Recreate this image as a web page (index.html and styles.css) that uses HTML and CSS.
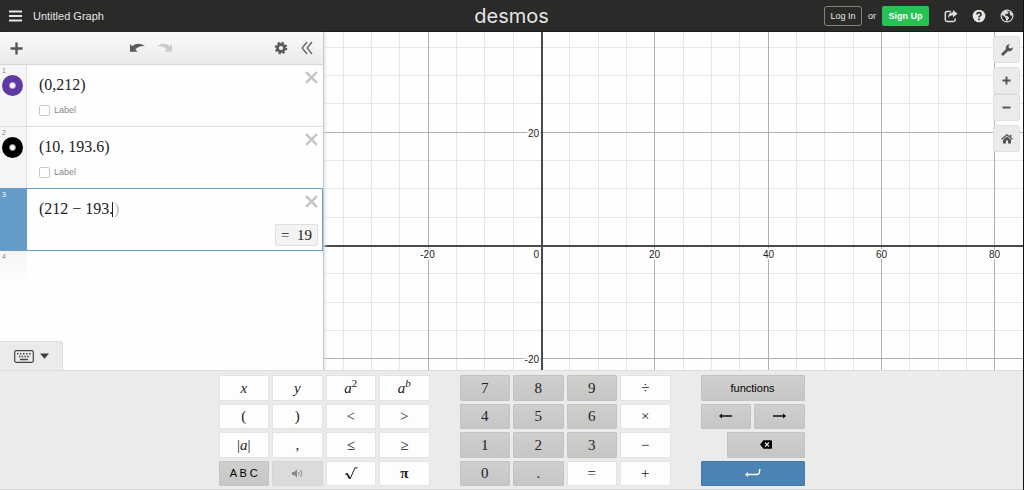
FILE: index.html
```html
<!DOCTYPE html>
<html lang="en">
<head>
<meta charset="utf-8">
<title>Untitled Graph</title>
<link rel="stylesheet" href="styles.css">
</head>
<body>
<div class="app">
  <header class="header">
    <div class="header-side">
      <button class="icon-btn" aria-label="Menu"><svg width="13" height="12" viewBox="0 0 13 12"><path d="M0 1.500h13M0 6h13M0 10.500h13" stroke="#e6e6e4" stroke-width="2"/></svg></button>
      <span class="title">Untitled Graph</span>
    </div>
    <a class="logo" href="#">desmos</a>
    <div class="header-side header-end">
      <button class="login">Log In</button>
      <span class="or">or</span>
      <button class="signup">Sign Up</button>
      <div class="header-icons">
        <button class="icon-btn" aria-label="Share"><svg width="14" height="14" viewBox="0 0 14 14"><path d="M7 2.500H3Q1.300 2.500 1.300 4.200V10.800Q1.300 12.500 3 12.500H9.500Q11.200 12.500 11.200 10.800V9.500" fill="none" stroke="#dededc" stroke-width="1.500"/><path d="M9 1l4.500 3.700L9 8.400V6.200Q5.500 6 4.300 9.500Q3.500 3.500 9 3.200z" fill="#dededc"/></svg></button>
        <button class="icon-btn" aria-label="Help"><svg width="14" height="14" viewBox="0 0 14 14"><circle cx="7" cy="7" r="6.300" fill="#e6e6e4"/><path d="M5 5.500Q5 3.600 7 3.600T9 5.400Q9 6.300 8 6.900Q7 7.400 7 8.500" fill="none" stroke="#2a2a28" stroke-width="1.600"/><rect x="6.200" y="9.500" width="1.700" height="1.700" fill="#2a2a28"/></svg></button>
        <button class="icon-btn" aria-label="Language"><svg width="14" height="14" viewBox="0 0 14 14"><circle cx="7" cy="7" r="5.900" fill="none" stroke="#d8d8d6" stroke-width="1.200"/><path d="M2 3.500L5 1.300 8 1.200 7.500 3 9 3.700 7.300 5 6 4.800 5 6.500 7.500 7 9.200 8.700 7.800 11 7 12.800 6 11 5.500 8.500 3.500 7 1.500 5.500z" fill="#d8d8d6"/><path d="M9.500 3l2-.4 1.300 3L11 7.200 10 5.500z" fill="#d8d8d6"/></svg></button>
      </div>
    </div>
  </header>

  <div class="workspace">
    <aside class="sidebar">
      <div class="toolbar">
        <button class="icon-btn" aria-label="Add item"><svg width="13" height="13" viewBox="0 0 13 13"><path d="M6.500 0.500v12M.5 6.500h12" stroke="#555" stroke-width="2.400"/></svg></button>
        <div class="history">
          <button class="icon-btn" aria-label="Undo"><svg width="15" height="10" viewBox="0 0 15 10"><path d="M0 1l2.300 2.300Q8-1.500 15 3.200Q9.500 2.300 5.300 6.200L7.500 8.700H0z" fill="#5b5b5b"/></svg></button>
          <button class="icon-btn" aria-label="Redo"><svg width="15" height="10" viewBox="0 0 15 10"><path d="M15 1l-2.300 2.300Q7-1.500 0 3.200Q5.500 2.300 9.700 6.200L7.500 8.700H15z" fill="#cbcbcb"/></svg></button>
        </div>
        <div class="tool-end">
          <button class="icon-btn" aria-label="Edit list"><svg width="14" height="14" viewBox="0 0 14 14"><circle cx="7" cy="7" r="3.500" fill="none" stroke="#5b5b5b" stroke-width="2.800"/><circle cx="7" cy="7" r="5.200" fill="none" stroke="#5b5b5b" stroke-width="2.200" stroke-dasharray="2.200 1.884"/></svg></button>
          <button class="icon-btn" aria-label="Hide list"><svg width="12" height="14" viewBox="0 0 12 14"><path d="M6 1L1.200 7 6 13M11 1L6.200 7 11 13" fill="none" stroke="#666" stroke-width="1.400"/></svg></button>
        </div>
      </div>

      <div class="list">
        <div class="expr">
          <div class="tab"><span>1</span><button class="point purple" aria-label="Point style 1"></button></div>
          <div class="body">
            <input class="math" aria-label="Expression 1" value="(0,212)">
            <label class="check"><input type="checkbox">Label</label>
          </div>
          <button class="close" aria-label="Delete 1"><svg width="13" height="13" viewBox="0 0 12 12"><path d="M1 1l10 10M11 1L1 11" stroke="#c4c4c4" stroke-width="2.200"/></svg></button>
        </div>
        <div class="expr">
          <div class="tab"><span>2</span><button class="point" aria-label="Point style 2"></button></div>
          <div class="body">
            <input class="math" aria-label="Expression 2" value="(10, 193.6)">
            <label class="check"><input type="checkbox">Label</label>
          </div>
          <button class="close" aria-label="Delete 2"><svg width="13" height="13" viewBox="0 0 12 12"><path d="M1 1l10 10M11 1L1 11" stroke="#c4c4c4" stroke-width="2.200"/></svg></button>
        </div>
        <div class="expr active">
          <div class="tab"><span>3</span></div>
          <div class="body">
            <div class="entry"><input class="math typing" aria-label="Expression 3" value="(212 − 193."><span class="caret"></span><span class="ghost">)</span></div>
            <output class="result">=&nbsp; 19</output>
          </div>
          <button class="close" aria-label="Delete 3"><svg width="13" height="13" viewBox="0 0 12 12"><path d="M1 1l10 10M11 1L1 11" stroke="#c4c4c4" stroke-width="2.200"/></svg></button>
        </div>
        <div class="expr next"><div class="tab"><span>4</span></div></div>
      </div>

      <button class="kb-toggle" aria-label="Hide keypad">
        <svg width="20" height="13" viewBox="0 0 20 13"><rect x=".7" y=".7" width="18.600" height="11.600" rx="1.500" fill="none" stroke="#444" stroke-width="1.200"/><path d="M3 3.800h14" stroke="#444" stroke-width="1.500" stroke-dasharray="1.500 1.500"/><path d="M5 6.500h11" stroke="#444" stroke-width="1.500" stroke-dasharray="1.500 1.200"/><path d="M6 9.500h8" stroke="#444" stroke-width="1.500"/></svg>
        <svg width="9" height="6" viewBox="0 0 9 6"><path d="M0 .5h9L4.500 5.800z" fill="#3c3c3c"/></svg>
      </button>
    </aside>

    <main class="graph">
      <svg class="plot" id="plot" role="img" aria-label="Graph paper"></svg>
      <div class="graph-tools">
        <button class="tool" aria-label="Graph settings"><svg width="12" height="12" viewBox="0 0 12 12"><path d="M1.800 10.200L7 5" stroke="#555" stroke-width="2.800" stroke-linecap="round"/><path d="M11.700 3.200A3.500 3.500 0 1 1 8.800.4L7.500 2.200 8 4l1.800.5z" fill="#555"/></svg></button>
        <div class="zoom">
          <button class="tool" aria-label="Zoom in"><svg width="9" height="9" viewBox="0 0 9 9"><path d="M4.500 .5v8M.5 4.500h8" stroke="#555" stroke-width="1.900"/></svg></button>
          <button class="tool" aria-label="Zoom out"><svg width="9" height="9" viewBox="0 0 9 9"><path d="M.5 4.500h8" stroke="#555" stroke-width="1.900"/></svg></button>
        </div>
        <button class="tool" aria-label="Default view"><svg width="12" height="10" viewBox="0 0 12 10"><path d="M.5 5.300L6 .8l5.500 4.500" fill="none" stroke="#555" stroke-width="1.300"/><path d="M2 5.700L6 2.500l4 3.200V9.500H7V6.500H5v3H2zM8.800.8H10.300V3.500L8.800 2.200z" fill="#555"/></svg></button>
      </div>
    </main>
  </div>

  <section class="keypad" aria-label="Keypad">
    <div class="keys wide">
      <button class="key"><i>x</i></button><button class="key"><i>y</i></button><button class="key"><span><i>a</i><sup>2</sup></span></button><button class="key"><span><i>a</i><sup><i>b</i></sup></span></button>
      <button class="key">(</button><button class="key">)</button><button class="key">&lt;</button><button class="key">&gt;</button>
      <button class="key"><span>|<i>a</i>|</span></button><button class="key">,</button><button class="key">≤</button><button class="key">≥</button>
      <button class="key dark sans abc">A B C</button>
      <button class="key muted" aria-label="Audio"><svg width="11" height="9" viewBox="0 0 11 9"><path d="M0 3h2L5 .5v8L2 6H0z" fill="#888"/><path d="M6.500 2.800q1.200 1.700 0 3.400M8.500 1.200q2.400 3.300 0 6.600" fill="none" stroke="#888"/></svg></button>
      <button class="key" aria-label="Square root"><svg width="14" height="13" viewBox="0 0 14 13"><path d="M1 7.500L3 6.300 6 12 11 .8H13.500" fill="none" stroke="#222"/><path d="M2.800 6.500L5.800 11.500" stroke="#222" stroke-width="1.600"/></svg></button>
      <button class="key"><b>π</b></button>
    </div>
    <div class="keys wide">
      <button class="key dark">7</button><button class="key dark">8</button><button class="key dark">9</button><button class="key">÷</button>
      <button class="key dark">4</button><button class="key dark">5</button><button class="key dark">6</button><button class="key">×</button>
      <button class="key dark">1</button><button class="key dark">2</button><button class="key dark">3</button><button class="key">−</button>
      <button class="key dark">0</button><button class="key dark">.</button><button class="key">=</button><button class="key">+</button>
    </div>
    <div class="keys actions">
      <button class="key dark sans full">functions</button>
      <button class="key dark half" aria-label="Left"><svg width="13" height="6" viewBox="0 0 13 6"><path d="M2 3h11" stroke="#000" stroke-width="1.400"/><path d="M0 3L3 .6v4.800z"/></svg></button>
      <button class="key dark half" aria-label="Right"><svg width="13" height="6" viewBox="0 0 13 6"><path d="M0 3h11" stroke="#000" stroke-width="1.400"/><path d="M13 3L10 .6v4.800z"/></svg></button>
      <button class="key dark back" aria-label="Backspace"><svg width="12" height="9" viewBox="0 0 12 9"><path d="M0 4.500L3.500 .3H11.200Q12 .3 12 1V8Q12 8.700 11.200 8.700H3.500z"/><path d="M5 2.500l4 4M9 2.500l-4 4" stroke="#ddd" stroke-width="1.300"/></svg></button>
      <button class="key enter full" aria-label="Enter"><svg width="16" height="8" viewBox="0 0 16 8"><path d="M2 5.500H12.500Q14.500 5.500 14.800 0" fill="none" stroke="#fff" stroke-width="1.500"/><path d="M0 5.500L3 3v5z" fill="#fff"/></svg></button>
    </div>
  </section>
</div>
<script src="graph.js"></script>
</body>
</html>
```
FILE: styles.css
```css
* { box-sizing: border-box; }
body { margin: 0; font-family: "Liberation Sans", Arial, sans-serif; color: #222; }
button { font: inherit; color: inherit; border: 0; padding: 0; background: none; cursor: pointer; }
svg { display: block; }

.app { display: flex; flex-direction: column; min-height: 100vh; border-right: 1px solid #111; background: #fefefe; }

.header { display: flex; align-items: center; height: 32px; padding: 0 9px; background: #2a2a28; border-bottom: 1px solid #1b1b1a; color: #e6e6e4; }
.header-side { flex: 1; display: flex; align-items: center; gap: 11px; }
.title { font-size: 11px; }
.logo { font: 20px/28px Inter, sans-serif; color: #e6e6e4; text-decoration: none; }
.header-end { justify-content: flex-end; gap: 5px; font-size: 9px; }
.login { height: 20px; width: 38px; border: 1px solid #82827f; border-radius: 3px; }
.or { width: 10px; text-align: center; }
.signup { height: 20px; width: 47px; border-radius: 2px; background: #27c254; color: #fff; font-weight: bold; }
.header-icons { display: flex; gap: 14px; padding-left: 10px; }

.workspace { flex: 1; display: flex; min-height: 0; }
.sidebar { position: relative; flex: none; width: 324px; display: flex; flex-direction: column; border-right: 1px solid #c8c8c8; background: #fefefe; box-shadow: 1px 2px 3px #ddd; z-index: 1; }
.toolbar { display: flex; align-items: center; justify-content: space-between; height: 33px; padding: 0 10px; background: linear-gradient(#fbfbfb, #ebebeb); border-bottom: 1px solid #d6d6d6; }
.history { display: flex; gap: 12px; padding-left: 4px; }
.tool-end { display: flex; align-items: center; gap: 13px; }

.list { flex: 1; }
.expr { position: relative; display: flex; min-height: 62px; border-bottom: 1px solid #dcdcdc; }
.tab { flex: none; width: 27px; padding: 2px 2px 0; background: #f5f5f5; border-right: 1px solid #e2e2e2; font-size: 7px; line-height: 8px; color: #888; }
.tab span { display: block; }
.point { display: block; width: 21px; height: 21px; border-radius: 50%; background: radial-gradient(circle, #fff 2px, #000 4px); }
.point.purple { background: radial-gradient(circle, #fff 2px, #5e3aa2 4px); }
.body { flex: 1; display: flex; flex-direction: column; padding: 10px 5px 4px 12px; }
.math { width: 220px; height: 20px; padding: 0; border: 0; outline: 0; background: transparent; color: #222; font: 16px/20px "Liberation Serif", serif; }
.check { display: flex; align-items: center; gap: 4px; padding-top: 10px; font-size: 9px; line-height: 11px; color: #888; }
.check input { appearance: none; width: 11px; height: 11px; margin: 0; border: 1px solid #c8c8c8; border-radius: 2px; background: #fff; }
.close { position: absolute; top: 6px; right: 5px; }
.active { border-bottom-color: #6a9cc4; box-shadow: 0 -1px #6a9cc4, inset -1px 0 #6a9cc4; }
.active .tab { background: #659bc8; border-color: #659bc8; color: #fff; }
.active .body { justify-content: space-between; }
.entry { display: flex; align-items: center; }
.typing { width: 73px; }
.caret { width: 1px; height: 15px; background: #222; }
.ghost { padding-left: 1px; font: 16px/20px "Liberation Serif", serif; color: #bbb; }
.result { align-self: flex-end; padding: 0 5px; border: 1px solid #dedede; border-radius: 2px; background: #f3f3f3; font: 15px/20px "Liberation Serif", serif; }
.next { min-height: 32px; border: 0; }
.next .tab { background: linear-gradient(#f5f5f5, #fefefe); border: 0; }

.kb-toggle { display: flex; align-items: center; gap: 6px; width: 63px; height: 29px; padding-left: 14px; background: #ebebea; border: 1px solid #dcdcdc; border-width: 1px 1px 0 0; border-radius: 0 3px 0 0; }

.graph { position: relative; flex: 1; min-width: 0; overflow: hidden; }
.plot { position: absolute; width: 100%; height: 100%; font-size: 10px; }
.minor { stroke: #e6e6e6; }
.major { stroke: #b0b0b0; }
.axis { stroke: #4a4a4a; stroke-width: 2; }
.tick { fill: #222; stroke: #fff; stroke-width: 3; paint-order: stroke; }
.graph-tools { position: absolute; top: 4px; right: 3px; display: flex; flex-direction: column; gap: 4px; }
.tool { display: flex; align-items: center; justify-content: center; width: 27px; height: 27px; background: #ebebea; border: 1px solid #e0e0df; border-radius: 3px; }
.zoom .tool + .tool { border-top-color: #dadada; }

.keypad { display: flex; justify-content: center; gap: 30px; height: 120px; padding: 4px 0 3px; background: #ebebea; border-top: 1px solid #dcdcdc; border-bottom: 1px solid #d8d8d8; position: relative; z-index: 2; }
.keys { display: grid; grid-template-columns: repeat(4, 1fr); grid-template-rows: repeat(4, 1fr); gap: 3px; }
.wide { width: 211px; }
.actions { width: 104px; }
.key { display: flex; align-items: center; justify-content: center; min-height: 0; background: #fdfdfd; border: 1px solid #e3e3e2; border-radius: 1px; color: #222; font: 15px/18px "Liberation Serif", serif; }
.key sup { font-size: 11px; line-height: 1px; }
.dark { background: linear-gradient(#cfcfce, #c6c6c5); border-color: #c3c3c2; }
.muted { background: #dbdbda; border-color: #d6d6d5; }
.sans { font: 11px/14px "Liberation Sans", Arial, sans-serif; color: #000; }
.full { grid-column: 1 / -1; }
.half { grid-column: span 2; }
.back { grid-column: 2 / -1; }
.enter { background: #4c83b5; border-color: #4579a8; }
```
FILE: graph.js
```js
const plot = document.getElementById("plot");
const unit = 113.3;
const originX = 218;
const originY = 214;

function add(name, attrs, text) {
  const el = document.createElementNS("http://www.w3.org/2000/svg", name);
  for (const key in attrs) el.setAttribute(key, attrs[key]);
  if (text) el.textContent = text;
  plot.appendChild(el);
}

function draw() {
  plot.replaceChildren();
  const w = plot.clientWidth;
  const h = plot.clientHeight;
  const labels = [];
  for (const cls of ["minor", "major"]) {
    for (let i = -40; i < 80; i++) {
      if ((i % 4 === 0) !== (cls === "major")) continue;
      const d = i * unit / 4;
      const x = Math.round(originX + d) - 0.5;
      const y = Math.round(originY - d) - 0.5;
      if (x > 0 && x < w) add("line", { x1: x, x2: x, y1: 0, y2: h, class: cls });
      if (y > 0 && y < h) add("line", { x1: 0, x2: w, y1: y, y2: y, class: cls });
      if (cls === "major" && i !== 0) {
        const t = String(i * 5);
        if (x > 0 && x < w) labels.push({ x: i < 0 ? x - 1 : x, y: originY + 12, anchor: "middle", t });
        if (y > 0 && y < h) labels.push({ x: originX - 3, y: y + 4, anchor: "end", t });
      }
    }
  }
  add("line", { x1: originX, x2: originX, y1: 0, y2: h, class: "axis" });
  add("line", { x1: 0, x2: w, y1: originY, y2: originY, class: "axis" });
  labels.push({ x: originX - 3, y: originY + 12, anchor: "end", t: "0" });
  for (const l of labels) add("text", { x: l.x, y: l.y, "text-anchor": l.anchor, class: "tick" }, l.t);
}

draw();
window.addEventListener("resize", draw);
```
